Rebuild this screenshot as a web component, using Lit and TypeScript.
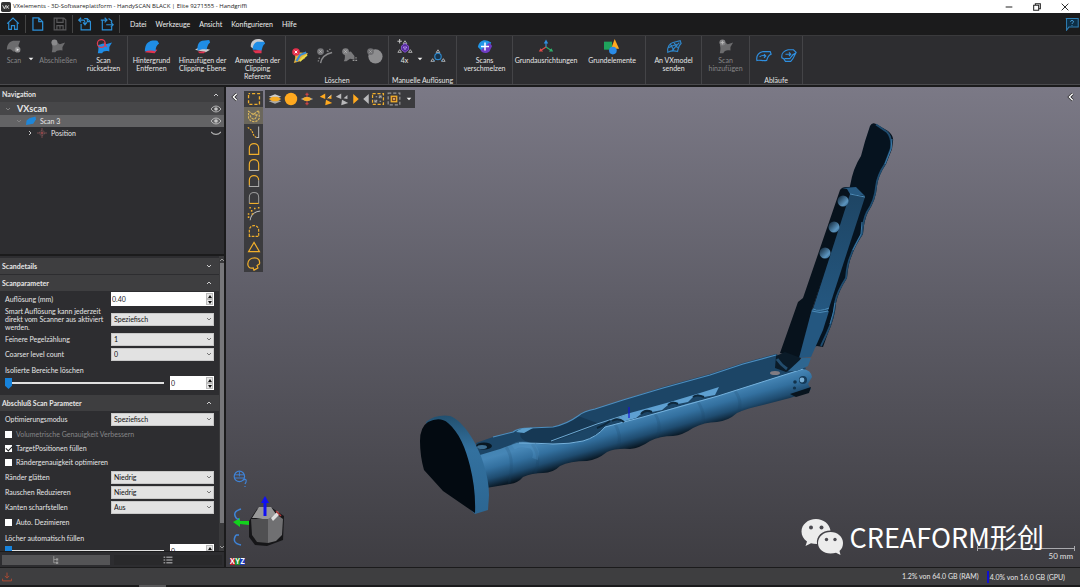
import { LitElement, html, css, svg, nothing, TemplateResult } from "lit";
import { customElement, property } from "lit/decorators.js";

const blob = (fill: string) => svg`<path fill=${fill} d="M1 14C1 8 3 4 6 3C9 1 13 2 15 2L17 5C14 7 13 10 13 14C9 12 5 13 1 14Z"/>`;

const icons: Record<string, TemplateResult> = {
  scan: svg`<path fill="#6c6c6e" d="M1 12C1 6 4 3 8 2H16L14 7L16 14H8C6 11 3 11 1 12Z"/><circle cx="13" cy="12" r="3.2" fill="#8d8d8f"/><path d="M12 10.4L14.6 12L12 13.6Z" fill="#eee"/>`,
  finish: svg`<path fill="#6c6c6e" d="M2 15C3 11 3 8 2 6L8 4L11 6L17 4L14 9L14 13C10 12 7 13 6 15Z"/><circle cx="5" cy="4" r="3.4" fill="#8a8a8c"/>`,
  reset: svg`<path fill="#1f8de6" d="M2 16C3 12 3 9 2 7L8 5L11 6L18 4L15 9L15 14C10 13 8 14 7 16Z"/><circle cx="6" cy="5" r="4.4" fill="none" stroke="#e23a50" stroke-width="1.4"/><path d="M9 4L12 9" stroke="#e23a50" stroke-width="1.2"/>`,
  background: svg`<path fill="#e2334f" d="M1 15L6 11L15 12L12 16Z"/>${blob("#1f8de6")}`,
  clipPlane: svg`<path fill="#c9c9cc" d="M0 12L5 9L17 12L12 15Z"/><path fill="#e2334f" d="M3 14L12 14L10 16H5Z"/><path fill="#1f8de6" d="M3 13C2 8 4 3 8 2L16 1L17 4C14 6 14 9 13 12C9 11 6 12 3 13Z"/>`,
  clipRef: svg`<path fill="#c9c9cc" d="M1 9C0 4 4 0 9 0C13 0 16 2 16 4L4 11Z"/><path fill="#e2334f" d="M3 13L13 12L13 16H6Z"/><path fill="#1f8de6" d="M3 12C3 7 5 4 8 3L16 3L17 5C14 7 14 10 13 13C9 12 6 12 3 12Z"/>`,
  delColor: svg`<path fill="#e8b33a" d="M2 17C4 12 4 9 3 6L10 5L18 6L14 12L9 15Z"/><path d="M5 15L9 8L16 5" stroke="#3c8ad0" stroke-width="2.4" fill="none"/><path d="M9 15L12 11L17 8" stroke="#e7e04c" stroke-width="1.8" fill="none"/><circle cx="4.500" cy="4.500" r="4.3" fill="#e5304c"/><path d="M3 3L6 6M6 3L3 6" stroke="#fff" stroke-width="1.1"/>`,
  delCurve: svg`<path d="M4 17C5 11 8 7 17 5M2 11L3 12M1 14L2 15M11 3L13 4M14 1L15 2" stroke="#8a8a8c" stroke-width="1.6" fill="none"/><circle cx="4" cy="4" r="3.8" fill="#77777a"/><path d="M2.6 2.6L5.4 5.4M5.4 2.6L2.6 5.4" stroke="#bbb" stroke-width=".8"/>`,
  delPatch: svg`<path fill="#7a7a7c" d="M2 15C4 12 3 8 3 5L10 4L14 9V13L9 12L5 15Z"/><path d="M12 14H14M15 11H16.5M15 14H17" stroke="#999" stroke-width="1.4"/><circle cx="4" cy="4" r="3.8" fill="#808082"/><path d="M2.6 2.6L5.4 5.4M5.4 2.6L2.6 5.4" stroke="#bbb" stroke-width=".8"/>`,
  delSphere: svg`<circle cx="9.5" cy="9.5" r="8" fill="#8e8e90"/><circle cx="4" cy="4" r="3.8" fill="#6f6f72"/><path d="M2.6 2.6L5.4 5.4M5.4 2.6L2.6 5.4" stroke="#aaa" stroke-width=".8"/>`,
  resUp: svg`<path d="M3 0V5M.5 2.5H5.5" stroke="#ccc" stroke-width="1.1"/><path d="M9 2L11 5H7ZM3 12L5 15H1ZM15 12L17 15H13Z" fill="none" stroke="#bbb"/><path d="M9 5L13 8V12L9 15L5 12V8Z" fill="#552b9c" stroke="#8b59d6"/><path d="M7 9L9 12L11 9Z" fill="none" stroke="#c9a9ff" stroke-width=".8"/>`,
  resDown: svg`<path d="M9 2L11 5H7ZM3 12L5 15H1ZM15 12L17 15H13Z" fill="none" stroke="#bbb"/><circle cx="9" cy="9.5" r="3.6" fill="#17344c" stroke="#2f8bd0" stroke-width="1.3"/><path d="M6 13L4 15M12 13L14 15" stroke="#2f8bd0"/>`,
  merge: svg`<path fill="#2196e8" d="M1 9C2 3 7 0 12 2L16 4L14 8L6 14Z"/><path fill="#6f3cc4" d="M4 13L14 4L17 8L14 14C10 17 6 16 4 13Z"/><path d="M9 4V13M4.500 8.500H13.500" stroke="#fff" stroke-width="1.7"/>`,
  align: svg`<path d="M9 9V2M9 2L7.600 4.500H10.400Z" stroke="#2f8fe0" stroke-width="1.300" fill="#2f8fe0"/><path d="M9 9L3 13M2 13.500L3 11.500L4.500 13.500Z" stroke="#e14a4a" stroke-width="1.300" fill="#e14a4a"/><path d="M9 9L15 13M16 13.500L13.500 13.500L15 11.500Z" stroke="#2fae6a" stroke-width="1.300" fill="#2fae6a"/>`,
  elements: svg`<rect x="0" y="3" width="9" height="9" fill="#1fa35c"/><path d="M12 0L17 11H8Z" fill="#ffa91f"/><circle cx="10" cy="13" r="4.300" fill="#2a8be8"/>`,
  vxmodel: svg`<path d="M2 15C1 9 4 5 8 4L16 2L17 5C14 7 14 11 13 14C9 13 6 13 2 15ZM5 6L9 13M9 4L13 10M2 10L12 6M6 14L15 4" fill="none" stroke="#2f86c9" stroke-width="1.300"/>`,
  addScan: svg`<path fill="#6c6c6e" d="M2 16C3 12 3 9 2 7L8 4L11 6L17 4L14 9L14 13C10 12 7 13 6 16Z"/><circle cx="5" cy="4" r="3.400" fill="#838385"/><path d="M5 2V6M3 4H7" stroke="#bbb"/>`,
  flow1: svg`<path d="M1 14C0 8 4 5 8 4H16L17 7C14 8 13 10 12 14C8 15 4 13 1 14ZM4 10C6 8 8 8 11 9M9 7L11 9L9 11" fill="none" stroke="#2f8fe0" stroke-width="1.300"/>`,
  flow2: svg`<path d="M1 11C0 6 4 3 8 2H14L17 5C15 8 15 11 11 15H5L3 12ZM5 7H11M9 5L11 7L9 9M4 12H10C12 9 13 7 16 6" fill="none" stroke="#2f8fe0" stroke-width="1.300"/>`,
  home: svg`<path d="M1.500 8.500L9 1.500L16.500 8.500M3.500 7V16H7V11H11V16H14.500V7" fill="none" stroke="#2c8fd6" stroke-width="1.500"/>`,
  doc: svg`<path d="M2.500 1H10L15 6V17H2.500ZM10 1V6H15" fill="none" stroke="#2c8fd6" stroke-width="1.600"/>`,
  save: svg`<path d="M1.500 1.500H14L16.500 4V16.500H1.500ZM5 1.500V7H13V1.500M5 16V11H13V16M9 12V15" fill="none" stroke="#59595b" stroke-width="1.500"/>`,
  load: svg`<path d="M4 9V16.500H16V6L12 2H8M12 2V6H16M4 1L1 4L4 7M1 4H7C9 4 9 6 9 9M6.500 7L9 10L11.500 7" fill="none" stroke="#2c8fd6" stroke-width="1.500"/>`,
  store: svg`<path d="M3 9V16.500H15V11M11 2L15 5V7M1 4H8M6 1L9 4L6 7M3 4V9M8 10H17M14 7L17 10L14 13" fill="none" stroke="#2c8fd6" stroke-width="1.500"/>`,
  help: svg`<path d="M1 2H17V13H5L2 17V2Z" fill="#0d2e45" stroke="#2f7fb4" stroke-width="1.300"/><path d="M7 6C7 4 11 4 11 6C11 7.500 9 7.500 9 9M9 10.500V11.500" fill="none" stroke="#4ca4de" stroke-width="1.200"/>`,
  rect: svg`<rect x="2" y="2" width="14" height="14" fill="none" stroke="#f0ae2c" stroke-width="1.700" stroke-dasharray="4 2.500" stroke-dashoffset="2"/>`,
  free: svg`<path d="M2 3L8 7L15 2L16 11C14 18 4 18 2 11ZM4 8C6 15 12 15 13 6M6 6L12 8" fill="none" stroke="#d8b45c" stroke-width="1.500" stroke-dasharray="3 1.200"/>`,
  path: svg`<path d="M1 3L6 7L9 14L12 16" fill="none" stroke="#f0ae2c" stroke-width="1.500" stroke-dasharray="2.500 1.300"/><path d="M12 16H15V2" fill="none" stroke="#bbb" stroke-width="1.300"/>`,
  arch1: svg`<path d="M3 16V8C3 0 15 0 15 8V16Z" fill="none" stroke="#f0ae2c" stroke-width="1.500"/>`,
  arch2: svg`<path d="M3 16V8C3 0 15 0 15 8V16" fill="none" stroke="#f0ae2c" stroke-width="1.500"/><path d="M3 16H15" stroke="#bbb" stroke-width="1.300"/>`,
  arch3: svg`<path d="M3 14V8C3 0 15 0 15 8" fill="none" stroke="#f0ae2c" stroke-width="1.500"/><path d="M3 14V16H15V8" fill="none" stroke="#aaa" stroke-width="1.300"/>`,
  arch4: svg`<path d="M3 16V8C3 0 15 0 15 8V16" fill="none" stroke="#999" stroke-width="1.300"/><path d="M3 16H15" stroke="#f0ae2c" stroke-width="1.500"/>`,
  spray: svg`<path d="M4 17C5 10 9 6 17 5" fill="none" stroke="#bbb" stroke-width="1.300"/><path d="M1 9H3M1 13H3M5 5H7M3 1H5M9 2H11M14 1H16M6 9H8" stroke="#f0ae2c" stroke-width="2"/>`,
  arch5: svg`<path d="M3 16V8C3 0 15 0 15 8V16Z" fill="none" stroke="#f0ae2c" stroke-width="1.500" stroke-dasharray="3.500 1.500"/>`,
  tri: svg`<path d="M9 3L16 15H2Z" fill="none" stroke="#f0ae2c" stroke-width="1.500"/>`,
  poly: svg`<path d="M1 9C1 4 5 1 10 1C14 1 17 4 16 9L13 11L14 14L9 17L8 14C4 15 1 13 1 9Z" fill="none" stroke="#f0ae2c" stroke-width="1.600"/>`,
  layers: svg`<path d="M9 9L17 12L9 15L1 12Z" fill="#aaa"/><path d="M9 3L17 6L9 9L1 6Z" fill="#ccc"/><path d="M1 9L6 6H12L17 9L12 12H6Z" fill="#f7ab24"/>`,
  ball: svg`<circle cx="9" cy="9" r="8" fill="#ffa91f"/>`,
  layerMove: svg`<path d="M1 9L9 6L17 9L9 12Z" fill="#bbb"/><ellipse cx="9" cy="9" rx="5" ry="2.500" fill="#f7ab24"/><path d="M9 1V6M9 12V17M7 3H11M7 15H11" stroke="#c84444" stroke-width="1.500"/>`,
  shards: svg`<path d="M1 6L8 2V9ZM11 8L16 4V9ZM8 17L9 10L17 14Z" fill="#ffa91f"/><path d="M11 8L16 4" stroke="#ddd"/>`,
  shardsGray: svg`<path d="M1 6L8 2V9ZM11 8L16 4V9ZM8 17L9 10L17 14Z" fill="#b9b9bb"/>`,
  right: svg`<path d="M4 0L14 9L4 18Z" fill="#ffa91f"/>`,
  left: svg`<path d="M14 0L4 9L14 18Z" fill="#b9b9bb"/>`,
  selAll: svg`<rect x="2" y="2" width="14" height="14" fill="none" stroke="#f0ae2c" stroke-width="1.600" stroke-dasharray="4 2.300"/><path d="M5 13L8 10M10 8L13 5M6 6H8M11 12H13M5 10V13H8M13 8V5H10" stroke="#aaa" stroke-width="1.300" fill="none"/>`,
  selCore: svg`<rect x="1.500" y="1.500" width="15" height="15" fill="none" stroke="#999" stroke-width="1.500" stroke-dasharray="4 2.500"/><rect x="5.500" y="5.500" width="7" height="7" fill="#7a4a24" stroke="#f0ae2c" stroke-width="1.700"/><rect x="8" y="8" width="2" height="2" fill="#ffd9a0"/>`,
  down: svg`<path d="M2 5H16L9 13Z" fill="#f0f0f0"/>`,
  chevD: svg`<path d="M3 6L9 12L15 6" fill="none" stroke="currentColor" stroke-width="2.600"/>`,
  chevU: svg`<path d="M3 12L9 6L15 12" fill="none" stroke="currentColor" stroke-width="2.600"/>`,
  chevR: svg`<path d="M6 3L12 9L6 15" fill="none" stroke="currentColor" stroke-width="2.600"/>`,
  chevL: svg`<path d="M12 3L6 9L12 15" fill="none" stroke="#222" stroke-width="5"/><path d="M12 3L6 9L12 15" fill="none" stroke="#fff" stroke-width="2.500"/>`,
  eye: svg`<path d="M0 9C5 2 13 2 18 9C13 16 5 16 0 9Z" fill="none" stroke="#c4c4c4" stroke-width="1.600"/><circle cx="9" cy="9" r="3.300" fill="#c4c4c4"/>`,
  lid: svg`<path d="M0 7C5 13 13 13 18 7" fill="none" stroke="#b0b0b0" stroke-width="2"/>`,
  mesh: svg`<path fill="#1f86d8" d="M0 16L1 8L6 4L17 1L18 6L13 14Z"/>`,
  target: svg`<path d="M9 0V18M0 9H18" stroke="#8b5355" stroke-width="1.400"/><circle cx="9" cy="9" r="4.500" fill="none" stroke="#7a5a5c" stroke-width="1.300" stroke-dasharray="3 1.500"/><circle cx="9" cy="9" r="1.600" fill="#a04548"/>`,
  tree: svg`<path d="M5 2V14H10M5 8H10" fill="none" stroke="#9a9a9a" stroke-width="1.600"/><rect x="9" y="6" width="4" height="4" fill="#9a9a9a"/><rect x="9" y="12" width="4" height="4" fill="#9a9a9a"/>`,
  list: svg`<path d="M1 4H4M6 4H17M1 9H4M6 9H17M1 14H4M6 14H17" stroke="#8f8f91" stroke-width="2.400"/>`,
  drop: svg`<path d="M9 1V11M5 7L9 11L13 7M1 12V16H17V12" fill="none" stroke="#a84832" stroke-width="1.800"/>`,
  globe: svg`<circle cx="8" cy="8" r="6.500" fill="none" stroke="#3f83d6" stroke-width="1.500"/><path d="M2 6H14M2 10H14M8 2V8" stroke="#3f83d6" stroke-width="1.200"/>`,
  min: svg`<path d="M3 9H15" stroke="#222" stroke-width="1.800"/>`,
  restore: svg`<path d="M3 6H12V15H3ZM6 6V3H15V12H12" fill="none" stroke="#222" stroke-width="1.900"/>`,
  close: svg`<path d="M3 3L15 15M15 3L3 15" stroke="#222" stroke-width="1.700"/>`,
  app: svg`<rect width="18" height="18" rx="3" fill="#333"/><path d="M3 6L6 12L9 6L14 12M14 6L9 12" fill="none" stroke="#eee" stroke-width="1.600"/>`,
};

const icon = (name: string, size = "m") =>
  html`<svg class="ico ${size}" viewBox="0 0 18 18" aria-hidden="true">${icons[name]}</svg>`;

const base = css`
  * { box-sizing: border-box; }
  .ico { display: block; flex: none; width: 14px; height: 14px; }
  .ico.xs { width: 6px; height: 6px; }
  .ico.s { width: 10px; height: 10px; }
  .ico.l { width: 16px; height: 16px; }
  button { font: inherit; color: inherit; background: none; border: 0; padding: 0; margin: 0; }
`;

@customElement("vx-ribbon")
export class VxRibbon extends LitElement {
  static styles = [base, css`
    :host { display: flex; height: 49px; background: #2d2d30; border-bottom: 1px solid #4a4a4d; color: #e6e6e6; }
    .group { display: flex; flex-direction: column; border-right: 1px solid #444447; padding-top: 3px; }
    .items { display: flex; align-items: flex-start; }
    .cmd { display: flex; flex-direction: column; align-items: center; gap: 1px; line-height: 8px; text-align: center; }
    .cmd span { white-space: pre-line; }
    .cmd:disabled { color: #858587; }
    .arrow { width: 8px; padding-top: 17px; }
    .w24 { width: 25px; } .w28 { width: 28px; } .w44 { width: 44px; } .w48 { width: 47px; }
    .w52 { width: 55px; } .w66 { width: 66px; }
    .mid { padding-top: 9px; }
    .caption { margin-top: auto; line-height: 8px; text-align: center; }
    .pad { padding-left: 1px; padding-right: 1px; }
    .wide { padding-left: 3px; padding-right: 3px; }
  `];

  private cmd(w: string, ic: string, label = "", off = false, title = label) {
    return html`<button class="cmd ${w}" ?disabled=${off} aria-label=${title}>${icon(ic, "l")}${label ? html`<span>${label}</span>` : nothing}</button>`;
  }

  render() {
    return html`
      <div class="group"><div class="items">
        ${this.cmd("w28", "scan", "Scan", true)}
        <button class="arrow" aria-label="Scan">${icon("down", "xs")}</button>
        ${this.cmd("w44", "finish", "Abschließen", true)}
        ${this.cmd("w48", "reset", "Scan\nrücksetzen")}
      </div></div>
      <div class="group"><div class="items">
        ${this.cmd("w48", "background", "Hintergrund\nEntfernen")}
        ${this.cmd("w52", "clipPlane", "Hinzufügen der\nClipping-Ebene")}
        ${this.cmd("w52", "clipRef", "Anwenden der\nClipping\nReferenz")}
      </div></div>
      <div class="group pad"><div class="items mid">
        ${this.cmd("w24", "delColor", "", false, "Löschen")}${this.cmd("w24", "delCurve", "", true, "Löschen")}
        ${this.cmd("w24", "delPatch", "", true, "Löschen")}${this.cmd("w24", "delSphere", "", true, "Löschen")}
      </div><div class="caption">Löschen</div></div>
      <div class="group wide"><div class="items">
        ${this.cmd("w24", "resUp", "4x")}
        <button class="arrow" aria-label="4x">${icon("down", "xs")}</button>
        <div class="mid">${this.cmd("w24", "resDown", "", false, "Manuelle Auflösung")}</div>
      </div><div class="caption">Manuelle Auflösung</div></div>
      <div class="group"><div class="items">${this.cmd("w52", "merge", "Scans\nverschmelzen")}</div></div>
      <div class="group"><div class="items">
        ${this.cmd("w66", "align", "Grundausrichtungen")}${this.cmd("w66", "elements", "Grundelemente")}
      </div></div>
      <div class="group"><div class="items">${this.cmd("w52", "vxmodel", "An VXmodel\nsenden")}</div></div>
      <div class="group"><div class="items">${this.cmd("w48", "addScan", "Scan\nhinzufügen", true)}</div></div>
      <div class="group pad"><div class="items mid">
        ${this.cmd("w24", "flow1", "", false, "Abläufe")}${this.cmd("w24", "flow2", "", false, "Abläufe")}
      </div><div class="caption">Abläufe</div></div>`;
  }
}

@customElement("vx-select")
export class VxSelect extends LitElement {
  @property() value = "";
  @property() label = "";
  static styles = [base, css`
    :host { display: block; }
    label { display: grid; grid-template-columns: 106px 1fr; align-items: center; min-height: 14px; line-height: 8px; }
    .box { display: grid; align-items: center; }
    select, .ico { grid-area: 1 / 1; }
    select { appearance: none; width: 100%; height: 13px; margin: 0; padding: 0 2px; border: 1px solid #c8c8c8; border-radius: 0; background: #e2e2e2; color: #111; font: inherit; line-height: 11px; }
    .ico { justify-self: end; margin-right: 2px; color: #666; pointer-events: none; }
  `];
  render() {
    return html`<label><span>${this.label}</span><span class="box"><select><option>${this.value}</option></select>${icon("chevD", "xs")}</span></label>`;
  }
}

@customElement("vx-number")
export class VxNumber extends LitElement {
  @property() value = "";
  @property() label = "";
  static styles = [base, css`
    :host { display: flex; height: 14px; }
    input { flex: 1; min-width: 0; height: 100%; border: 0; padding: 0 1px; margin: 0; background: #fff; color: #222; font: inherit; }
    .spin { display: flex; flex-direction: column; width: 9px; padding: 1px; background: #fff; }
    .spin button { flex: 1; display: grid; place-items: center; background: #e6e6e6; border: 1px solid #bbb; }
    .spin svg { width: 4px; height: 3px; display: block; }
  `];
  render() {
    return html`<input type="text" inputmode="decimal" .value=${this.value} aria-label=${this.label}>
      <span class="spin">
        <button aria-label="+"><svg viewBox="0 0 4 3"><path d="M0 3L2 0L4 3Z" fill="#111"/></svg></button>
        <button aria-label="-"><svg viewBox="0 0 4 3"><path d="M0 0L2 3L4 0Z" fill="#111"/></svg></button>
      </span>`;
  }
}

@customElement("vx-sidebar")
export class VxSidebar extends LitElement {
  static styles = [base, css`
    :host { display: flex; flex-direction: column; min-height: 0; background: #2d2d30; color: #e6e6e6; border-right: 2px solid #1b1b1c; }
    .nav { height: 169px; border-bottom: 2px solid #1b1b1c; flex: none; }
    .head { display: flex; align-items: center; justify-content: space-between; width: 100%; padding: 0 7px 0 2px; background: #3e3e40; font-weight: 700; text-align: left; height: 16px; margin-bottom: 1px; }
    .nav .head { height: 15px; margin: 0; padding-right: 5px; }
    .row { display: flex; align-items: center; gap: 4px; height: 12px; padding: 0 3px 0 5px; }
    .row span { flex: 1; }
    .root { height: 13px; background: #474749; font-size: 9px; font-weight: 700; gap: 6px; }
    .root .ico:first-child, .sel .ico:first-child { color: #888; }
    .sel { background: #636365; padding-left: 16px; }
    .child { padding-left: 27px; }
    .body { flex: 1; min-height: 0; display: flex; }
    .sections { flex: 1; min-width: 0; overflow: hidden; padding-top: 2px; }
    .bar { width: 5px; display: flex; flex-direction: column; align-items: center; background: #3a3a3c; color: #aaa; padding: 1px 0; }
    .bar i { width: 4px; background: #77777a; height: 260px; margin-bottom: auto; }
    .fields { display: grid; gap: 1px; padding: 0 5px 5px; }
    .line { display: grid; grid-template-columns: 106px 1fr; align-items: center; line-height: 8px; }
    .checks { display: grid; }
    .check { display: flex; align-items: center; gap: 4px; height: 14px; }
    .check.dim { color: #858587; }
    .check input { appearance: none; width: 7px; height: 7px; margin: 0; background: #fff; display: grid; place-items: center; }
    .check input:checked::before { content: ""; width: 5px; height: 3px; border: solid #222; border-width: 0 0 1px 1px; transform: rotate(-45deg); }
    .caption { padding-top: 4px; line-height: 9px; }
    .slide { display: grid; grid-template-columns: 1fr 44px; gap: 6px; align-items: center; }
    input[type="range"] { appearance: none; width: 100%; height: 14px; margin: 0; background: none; }
    input[type="range"]::-webkit-slider-runnable-track { height: 2px; background: #e0e0e0; }
    input[type="range"]::-webkit-slider-thumb { appearance: none; width: 7px; height: 11px; margin-top: -4px; background: #1783dc; clip-path: polygon(0 0, 100% 0, 100% 70%, 50% 100%, 0 70%); }
    .tabs { display: grid; grid-template-columns: 1fr 1fr; gap: 4px; padding: 3px 2px 2px; border-top: 1px solid #1b1b1c; }
    .tabs button { height: 10px; display: grid; place-items: center; background: #29292b; }
    .tabs .on { background: #545456; }
    .tabs svg { height: 8px; }
  `];

  private slider(label: string) {
    return html`<label class="caption" for=${label}>${label}</label>
      <div class="slide"><input id=${label} type="range" value="0"><vx-number value="0" .label=${label}></vx-number></div>`;
  }
  private check(label: string, on = false, dim = false) {
    return html`<label class="check ${dim ? "dim" : ""}"><input type="checkbox" ?checked=${on} ?disabled=${dim}>${label}</label>`;
  }

  render() {
    return html`
      <section class="nav">
        <button class="head">Navigation ${icon("chevU", "xs")}</button>
        <div class="row root">${icon("chevD", "xs")}<span>VXscan</span>${icon("eye", "s")}</div>
        <div class="row sel">${icon("chevD", "xs")}${icon("mesh", "s")}<span>Scan 3</span>${icon("eye", "s")}</div>
        <div class="row child">${icon("chevR", "xs")}${icon("target", "s")}<span>Position</span>${icon("lid", "s")}</div>
      </section>
      <div class="body">
        <div class="sections">
          <button class="head">Scandetails ${icon("chevD", "xs")}</button>
          <button class="head">Scanparameter ${icon("chevU", "xs")}</button>
          <div class="fields">
            <div class="line"><span>Auflösung (mm)</span><vx-number value="0.40" label="Auflösung (mm)"></vx-number></div>
            <vx-select label="Smart Auflösung kann jederzeit direkt vom Scanner aus aktiviert werden." value="Speziefisch"></vx-select>
            <vx-select label="Feinere Pegelzählung" value="1"></vx-select>
            <vx-select label="Coarser level count" value="0"></vx-select>
            ${this.slider("Isolierte Bereiche löschen")}
          </div>
          <button class="head">Abschluß Scan Parameter ${icon("chevU", "xs")}</button>
          <div class="fields">
            <vx-select label="Optimierungsmodus" value="Speziefisch"></vx-select>
            <div class="checks">
              ${this.check("Volumetrische Genauigkeit Verbessern", false, true)}
              ${this.check("TargetPositionen füllen", true)}
              ${this.check("Rändergenauigkeit optimieren")}
            </div>
            <vx-select label="Ränder glätten" value="Niedrig"></vx-select>
            <vx-select label="Rauschen Reduzieren" value="Niedrig"></vx-select>
            <vx-select label="Kanten scharfstellen" value="Aus"></vx-select>
            ${this.check("Auto. Dezimieren")}
            ${this.slider("Löcher automatisch füllen")}
          </div>
        </div>
        <div class="bar">${icon("chevU", "xs")}<i></i>${icon("chevD", "xs")}</div>
      </div>
      <div class="tabs"><button class="on" aria-label="Navigation">${icon("tree", "s")}</button><button aria-label="Liste">${icon("list", "s")}</button></div>`;
  }
}

@customElement("vx-viewport")
export class VxViewport extends LitElement {
  static styles = [base, css`
    :host { display: block; position: relative; overflow: hidden; min-width: 0; min-height: 0; background: linear-gradient(#7b7986, #5e5d67 45%, #3e3d42); }
    .scene { display: block; width: 100%; height: 100%; }
    .palette, .strip, .fold, .mark, .scale, .axes { position: absolute; }
    .fold { left: 4px; top: 5px; }
    .fold.end { left: auto; right: 4px; }
    .palette { left: 18px; top: 4px; width: 19px; height: 181px; display: flex; flex-direction: column; background: #3b3b3e; }
    .palette button { flex: 1; display: grid; place-items: center; }
    .palette .on { background: #6b675c; }
    .strip { left: 39px; top: 3px; height: 18px; display: flex; align-items: center; gap: 2px; padding: 0 3px; background: #3b3b3e; }
    .strip .gap { margin-left: 3px; }
    .strip .arrow { margin-left: 3px; }
    .strip .slim { width: 8px; display: grid; place-items: center; }
    .mark { right: 36px; bottom: 11px; display: flex; align-items: center; gap: 6px; color: #fff; font: 27px/38px "Noto Sans CJK SC", sans-serif; }
    .mark svg { width: 43px; height: 38px; }
    .scale { right: 5px; bottom: 7px; width: 98px; color: #e0e0e0; text-align: right; line-height: 8px; padding: 0 2px; font-size: 8px; }
    .scale::before { content: ""; display: block; height: 5px; margin: 0 -2px 1px; border: solid #a9a9ad; border-width: 0 1px; background: linear-gradient(#a9a9ad, #a9a9ad) center / 100% 1px no-repeat; }
    .axes { left: 4px; bottom: 2px; display: flex; line-height: 7px; font-weight: 700; color: #fff; }
    .axes b { width: 5px; text-align: center; }
    .x { background: #b81f2c; } .y { background: #1e8c2c; } .z { background: #1c3bb8; }
  `];

  render() {
    const tools = ["rect", "free", "path", "arch1", "arch2", "arch3", "arch4", "spray", "arch5", "tri", "poly"];
    return html`
      <svg class="scene" viewBox="226 87 854 480" preserveAspectRatio="xMidYMid meet" role="img" aria-label="Scan 3">
        <defs>
          <linearGradient id="shell" gradientUnits="userSpaceOnUse" x1="650" y1="402" x2="661" y2="441">
            <stop offset="0" stop-color="#4382b0"/><stop offset=".25" stop-color="#4686b6"/><stop offset=".5" stop-color="#33709f"/><stop offset=".75" stop-color="#1f4c70"/><stop offset="1" stop-color="#07131d"/>
          </linearGradient>
          <linearGradient id="rim" x1="0" y1="0" x2="0" y2="1"><stop offset="0" stop-color="#22506f"/><stop offset=".35" stop-color="#33719f"/><stop offset="1" stop-color="#2c6692"/></linearGradient>
          <linearGradient id="hole" x1="0" y1="0" x2="1" y2="1"><stop offset="0" stop-color="#0c1e2e"/><stop offset=".7" stop-color="#5c95bf"/><stop offset="1" stop-color="#27587e"/></linearGradient>
          <linearGradient id="side" x1="0" y1="0" x2="0" y2="1"><stop offset="0" stop-color="#1e4564"/><stop offset="1" stop-color="#245780"/></linearGradient>
        </defs>

        <path fill="#06131f" d="M870 126Q872 122 876 124L888 131Q894 136 893 141L892 149L886 164Q878 176 877 186Q876 200 868 212Q864 220 863 234Q855 246 852 255Q848 264 847 278Q838 292 836 303Q835 318 828 333L823 347L817 346L800 350L850 186Q853 168 861 156Q865 140 870 126Z"/>
        <path fill="none" stroke="#1f4c6f" stroke-width="1.800" d="M876 124.500L887 132Q892 137 891 148L885 164Q877 176 876 187Q875 200 867 212Q863 220 862 234Q854 246 851 255Q847 264 846 278Q837 292 835 303Q834 318 827 333L821 346"/>
        <path fill="none" stroke="#3c7aa8" stroke-width="1" d="M892 139L891 149L885 164M862 222L861 234L853 250M835 303Q834 312 830 324"/>
        <path fill="#07121c" d="M840 190Q842 187 846 187L855 187L850 194L812 310L800 358L780 353L798 302L803 298Z"/>
        <path fill="url(#side)" d="M850 194L865 197L828 311L813 309Z"/>
        <path fill="#275a82" d="M842 188L856 187L865 196L850 194L847 189Z"/>
        <path fill="#245780" d="M812 309L829 311L823 330L811 357L799 358Z"/>
        <path d="M850 194L865 197M813 309Q820 312 829 308M812 311Q820 314 828 311" fill="none" stroke="#4c8bb8" stroke-width="1"/>
        <circle cx="843" cy="201" r="5.500" fill="url(#hole)"/><circle cx="834" cy="227" r="5.500" fill="url(#hole)"/><circle cx="825" cy="253" r="5.500" fill="url(#hole)"/>

        <path fill="#1c4566" d="M476 443L493 437L513 432Q518 428 530 428L553 427Q567 424 578 416Q584 411 595 409L623 400L663 387L710 374L743 363L776 354L806 368L800 378L720 400L640 425L600 440L553 445L480 462Z"/>
        <path fill="#163854" d="M520 434Q525 428 531 428L553 427Q567 424 578 416L600 424L553 442L530 443Q520 440 520 434Z"/>
        <path d="M493 437L513 432Q518 428 530 428L553 427Q567 424 578 416Q584 411 595 409L623 400L663 388L710 375L743 364L776 355" fill="none" stroke="#4d8ebf" stroke-width="1.200"/>
        <path d="M516 432Q522 427 533 428L524 433Z" fill="#5c9ecb"/>

        <path fill="url(#shell)" d="M480 455L500 449L511 445Q519 441 530 443Q542 445 553 444Q570 444 583 441Q597 437 605 427L627 421L643 417L690 403L718 396L743 388L790 373L803 369Q811 370 812 377L808 384L811 389L808 392L790 398L763 405Q748 408 737 413Q728 421 717 422Q704 422 693 428Q683 435 673 436Q660 436 650 441Q640 448 630 449Q616 448 607 452Q597 460 587 461Q570 461 560 466Q553 473 543 473Q532 473 523 477Q518 483 510 484L486 488Z"/>
        <path d="M506 447Q515 458 509 484M532 444Q542 456 535 474M615 424Q622 436 618 449M655 414Q662 424 657 438M698 402Q706 414 702 424M735 391Q742 400 739 411" fill="none" stroke="#173e5c" stroke-opacity=".16" stroke-width="3"/>
        <path d="M513 447Q520 442 532 446Q538 451 535 459" fill="none" stroke="#66a9d9" stroke-opacity=".22" stroke-width="6"/>
        <path fill="#1c4566" d="M551 442L596 428L605 427Q597 437 583 441Q570 444 553 444Z"/>
        <path d="M551 441L597 424L628 414" fill="none" stroke="#6da8d2" stroke-width="1"/>
        <path d="M519 443Q535 443 553 444Q570 444 583 441Q597 437 605 427L643 417L718 396L803 369" fill="none" stroke="#75b1dc" stroke-width="1"/>
        <path fill="#5ea0d1" d="M610 421L630 413L670 402L700 393L719 387L715 395L704 397Q697 392 693 397L688 402L678 404Q672 399 668 405L662 410L652 412Q645 407 641 414L636 418L622 422Q615 416 612 420Z"/>
        <path d="M597 428Q605 425 610 421M612 421Q618 417 624 422M641 414Q645 409 652 412M668 405Q672 401 678 404M693 397Q697 394 704 397" fill="none" stroke="#0e293d" stroke-width="2"/>
        <path d="M629 407V418" stroke="#1414d8" stroke-width="1.200"/>

        <path fill="#0b1b28" d="M776 356L785 352L801 358L797 367L786 372L775 368Z"/>
        <path fill="#2e6690" d="M802 358L811 358L808 366L797 371H788Z"/>
        <path d="M777 359Q781 365 787 369" fill="none" stroke="#234c6c" stroke-width="3"/>
        <ellipse cx="775" cy="373" rx="5" ry="2" fill="#807c83"/>
        <path d="M790 394L811 387L809 393L796 397Z" fill="#08141e"/>
        <circle cx="803" cy="380" r="4" fill="#153b59"/><circle cx="802" cy="380" r="2.400" fill="#79aed4"/><circle cx="795" cy="382" r="1.800" fill="#12324b"/><circle cx="794.500" cy="388" r="1.600" fill="#12324b"/>

        <ellipse cx="484" cy="446" rx="8" ry="3.500" fill="#081722"/><ellipse cx="482" cy="447" rx="5" ry="2" fill="#3d6d90"/>
        <path fill="url(#rim)" d="M426 422Q436 414 450 416C463 421 476 441 483 462Q489 480 489 495L488 510L475 514L440 480Z"/>
        <path fill="#030a11" d="M420 441Q420 427 428 422Q440 416 448 423C459 432 466 449 470 466Q476 490 475 513L443 491L424 470Q420 456 420 441Z"/>

        <path fill="#161618" d="M249 521L257 509L272 508L284 516L283 540L267 546L255 545L249 537Z"/>
        <path fill="#989898" d="M252 518L259 507H271L276 514L269 520L256 518Z"/>
        <path fill="#707072" d="M268 519L276 514L283 519L282 535L276 541L268 543Z"/>
        <path fill="#505052" d="M251 519L268 519V543L257 542L252 535Z"/>
        <path fill="#ddd" d="M271 518L278 511L279 515L273 521Z"/><path d="M276 511L281 516" stroke="#a33" stroke-width="1.500"/>
        <path fill="#1010f4" d="M263.500 516V503H261L265 496L269 503H266.500V516Z"/>
        <path fill="#12d21c" d="M249 521L240 521L240 518L233 522L240 527V524L249 525Z"/>
        <g transform="translate(233 470) scale(.8)">${icons.globe}</g>
        <path d="M243 480Q247 478 246 482L245 484M245 486V487" fill="none" stroke="#3f83d6" stroke-width="1.200"/>
        <path d="M241 509Q231 512 237 519M237 519L239 519M241 545Q231 543 236 535M236 535H239" fill="none" stroke="#3f83d6" stroke-width="1.500"/>
      </svg>

      <button class="fold" aria-label="Werkzeugleiste">${icon("chevL", "s")}</button>
      <button class="fold end" aria-label="Seitenleiste">${icon("chevL", "s")}</button>
      <div class="palette" role="toolbar">${tools.map((t) => html`<button class=${t === "free" ? "on" : ""} aria-label=${t}>${icon(t)}</button>`)}</div>
      <div class="strip" role="toolbar">
        <button aria-label="layers">${icon("layers")}</button><button aria-label="ball">${icon("ball")}</button><button aria-label="move">${icon("layerMove")}</button>
        <button class="gap" aria-label="shards">${icon("shards")}</button><button aria-label="shards">${icon("shardsGray")}</button>
        <button class="slim" aria-label="next">${icon("right", "s")}</button><button class="slim" aria-label="previous">${icon("left", "s")}</button>
        <button aria-label="select">${icon("selAll")}</button><button aria-label="core">${icon("selCore")}</button>
        <button class="arrow" aria-label="more">${icon("down", "xs")}</button>
      </div>
      <div class="scale">50 mm</div>
      <div class="axes"><b class="x">X</b><b class="y">Y</b><b class="z">Z</b></div>
      <div class="mark">
        <svg viewBox="0 0 43 38" aria-hidden="true">
          <path fill="#ececec" d="M15 1C7 1 .500 6.500 .500 13.500C.500 17.500 2.500 21 6 23.500L4.500 28L10 25.300Q12.500 26 16 26C15 18 21 12.500 29.500 12.500C28.500 6 22.500 1 15 1Z"/>
          <path fill="#ececec" d="M29.500 14C22.500 14 17 18.800 17 25C17 31 22.500 35.500 29.500 35.500Q32.500 35.500 35 34.700L39.500 37L38.500 33C41 31 42 28 42 25C42 18.800 36.500 14 29.500 14Z"/>
          <g fill="#4a494f"><circle cx="10" cy="9.500" r="2"/><circle cx="20.500" cy="9.500" r="2"/><circle cx="25.500" cy="21.500" r="1.700"/><circle cx="34" cy="21.500" r="1.700"/></g>
        </svg>CREAFORM形创
      </div>`;
  }
}

@customElement("app-root")
export class AppRoot extends LitElement {
  static styles = [base, css`
    :host { display: grid; grid-template-rows: 13px 23px auto minmax(0, 1fr) 18px 2px; height: 100vh; background: #1b1b1c; font: 7px/9px Lato, "Open Sans", sans-serif; overflow: hidden; }
    .title { display: flex; align-items: center; gap: 2px; padding: 0 10px 0 1px; background: #fff; color: #222; font: 6px/9px "Open Sans", sans-serif; }
    .title span { flex: 1; }
    .title button { margin-left: 16px; }
    .menu { display: flex; align-items: center; padding: 0 1px 0 6px; color: #f0f0f0; border-bottom: 1px solid #3a3a3c; }
    .menu .tool { padding: 0 4px; }
    .menu .tool:first-child { padding-left: 0; }
    .sep { width: 1px; height: 18px; background: #444; margin: 0 1px; }
    .links { display: flex; gap: 9px; margin-left: 9px; flex: 1; }
    .main { display: grid; grid-template-columns: 226px minmax(0, 1fr); min-height: 0; padding-top: 2px; }
    .status { display: flex; align-items: center; justify-content: flex-end; padding: 0 15px 0 2px; background: #3e3e40; border-top: 1px solid #1b1b1c; color: #e6e6e6; gap: 8px; }
    .status .ico { margin-right: auto; }
    .gpu { border-left: 2px solid #1010d0; padding-left: 1px; line-height: 12px; }
    .grip { width: 27px; margin-left: 139px; background: #58585a; }
  `];

  render() {
    return html`
      <header class="title">${icon("app", "s")}<span>VXelements - 3D-Softwareplattform - HandySCAN BLACK | Elite 9271555 - Handgriffi</span>
        <button aria-label="Minimieren">${icon("min", "s")}</button><button aria-label="Wiederherstellen">${icon("restore", "s")}</button><button aria-label="Schließen">${icon("close", "s")}</button>
      </header>
      <nav class="menu">
        <button class="tool" aria-label="Start">${icon("home")}</button><i class="sep"></i>
        <button class="tool" aria-label="Neu">${icon("doc")}</button><button class="tool" aria-label="Speichern">${icon("save")}</button><i class="sep"></i>
        <button class="tool" aria-label="Importieren">${icon("load")}</button><button class="tool" aria-label="Exportieren">${icon("store")}</button><i class="sep"></i>
        <div class="links">${["Datei", "Werkzeuge", "Ansicht", "Konfigurieren", "Hilfe"].map((m) => html`<button>${m}</button>`)}</div>
        <button aria-label="Hilfe">${icon("help")}</button>
      </nav>
      <vx-ribbon></vx-ribbon>
      <main class="main"><vx-sidebar></vx-sidebar><vx-viewport></vx-viewport></main>
      <footer class="status">${icon("drop", "s")}<span>1.2% von 64.0 GB (RAM)</span><span class="gpu">4.0% von 16.0 GB (GPU)</span></footer>
      <div class="grip"></div>`;
  }
}
